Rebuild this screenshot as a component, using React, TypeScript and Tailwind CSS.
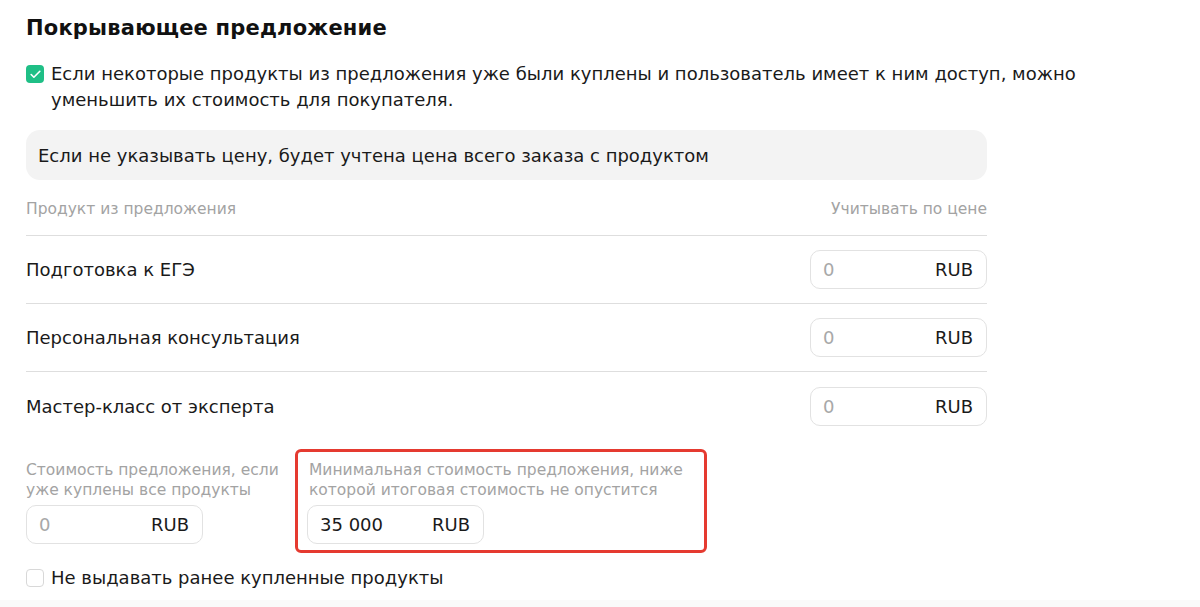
import { Check } from "lucide-react";

const products = ["Подготовка к ЕГЭ", "Персональная консультация", "Мастер-класс от эксперта"];

function PriceInput({ value }: { value: string }) {
  const empty = value === "0";
  return (
    <div className="flex h-[39px] w-[177px] items-center justify-between rounded-[10px] border border-[#e2e2e2] bg-white pl-[12px] pr-[13px] text-[18px]">
      <span className={empty ? "text-[#a8a8a8]" : "text-[#1a1a1a]"}>{value}</span>
      <span className="text-[#1a1a1a]">RUB</span>
    </div>
  );
}

export default function App() {
  return (
    <div
      className="flex min-h-[607px] w-full flex-col bg-white text-[#1a1a1a]"
      style={{ fontFamily: '"DejaVu Sans", "Open Sans", sans-serif' }}
    >
      <div className="w-[987px] pl-[26px] pt-[14px]">
        {/* Header */}
        <h1 className="text-[21px] font-bold leading-[28px] tracking-[0.2px] text-[#111]">Покрывающее предложение</h1>

        <div className="mt-[19px] flex w-[1080px] items-start gap-[7px]">
          <span className="mt-[4px] grid h-[18px] w-[18px] shrink-0 place-items-center rounded-[4px] bg-[#1fbf86] text-white">
            <Check className="h-[13px] w-[13px]" strokeWidth={3} />
          </span>
          <p className="text-[18px] leading-[26px]">
            Если некоторые продукты из предложения уже были куплены и пользователь имеет к ним доступ, можно
            уменьшить их стоимость для покупателя.
          </p>
        </div>

        {/* Info */}
        <div className="mt-[17px] flex h-[50px] items-center rounded-[14px] bg-[#f3f3f3] px-[12px] text-[18px]">
          Если не указывать цену, будет учтена цена всего заказа с продуктом
        </div>

        {/* Table */}
        <div className="mt-[19px] flex items-center justify-between pb-[16px] text-[15.5px] leading-[20px] text-[#a3a3a3]">
          <span>Продукт из предложения</span>
          <span>Учитывать по цене</span>
        </div>
        <div className="border-t border-[#dedede]">
          {products.map((p, i) => (
            <div
              key={p}
              className={`flex items-center justify-between text-[18px] ${
                i < products.length - 1 ? "h-[68px] border-b border-[#dedede]" : "h-[68px]"
              }`}
            >
              <span>{p}</span>
              <PriceInput value="0" />
            </div>
          ))}
        </div>

        {/* Totals */}
        <div className="mt-[9px] flex items-start">
          <div className="w-[269px] pt-[11px]">
            <p className="text-[15.5px] leading-[20px] text-[#a3a3a3]">
              Стоимость предложения, если уже куплены все продукты
            </p>
            <div className="mt-[5px]">
              <PriceInput value="0" />
            </div>
          </div>
          <div className="w-[412px] rounded-[6px] border-[3px] border-[#e53a30] px-[9px] pb-[6px] pt-[8px]">
            <p className="pl-[2px] text-[15.5px] leading-[20px] text-[#a3a3a3]">
              Минимальная стоимость предложения, ниже которой итоговая стоимость не опустится
            </p>
            <div className="mt-[5px]">
              <PriceInput value="35 000" />
            </div>
          </div>
        </div>

        <label className="mt-[11px] flex items-center gap-[7px] text-[18px]">
          <span className="h-[18px] w-[18px] shrink-0 rounded-[4px] border border-[#d8d8d8] bg-white" />
          Не выдавать ранее купленные продукты
        </label>
      </div>
      <div className="mt-auto h-[7px] bg-[#fafafa]" />
    </div>
  );
}
